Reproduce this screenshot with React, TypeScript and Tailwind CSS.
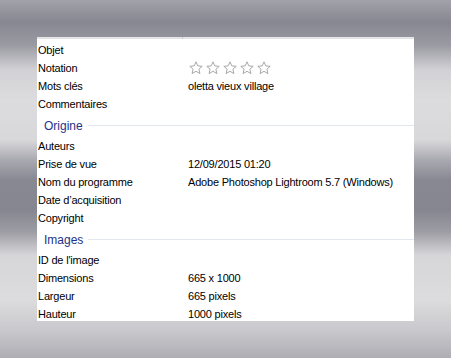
import React from 'react';

type Row = { label: string; value?: string; stars?: boolean };

const general: Row[] = [
  { label: 'Objet' },
  { label: 'Notation', stars: true },
  { label: 'Mots clés', value: 'oletta vieux village' },
  { label: 'Commentaires' },
];

const origine: Row[] = [
  { label: 'Auteurs' },
  { label: 'Prise de vue', value: '12/09/2015 01:20' },
  { label: 'Nom du programme', value: 'Adobe Photoshop Lightroom 5.7 (Windows)' },
  { label: 'Date d’acquisition' },
  { label: 'Copyright' },
];

const images: Row[] = [
  { label: "ID de l'image" },
  { label: 'Dimensions', value: '665 x 1000' },
  { label: 'Largeur', value: '665 pixels' },
  { label: 'Hauteur', value: '1000 pixels' },
];

const Star: React.FC = () => (
  <svg width="14" height="14" viewBox="0 0 14 14" fill="none">
    <path
      d="M7 0.8 L8.8 4.9 L13.2 5.3 L9.9 8.2 L10.9 12.6 L7 10.3 L3.1 12.6 L4.1 8.2 L0.8 5.3 L5.2 4.9 Z"
      stroke="#a8a8a8"
      strokeWidth="1"
      strokeLinejoin="round"
      fill="#ffffff"
    />
  </svg>
);

const PropRow: React.FC<{ row: Row }> = ({ row }) => (
  <div className="grid grid-cols-[150px_1fr] h-[18px] items-center pl-px tracking-[-0.2px]">
    <span>{row.label}</span>
    <span>
      {row.stars ? (
        <span className="flex gap-[3px] pl-px">
          <Star />
          <Star />
          <Star />
          <Star />
          <Star />
        </span>
      ) : (
        row.value
      )}
    </span>
  </div>
);

const Section: React.FC<{ title: string }> = ({ title }) => (
  <div className="flex items-center h-[24px] pl-[7px] gap-[5px] pt-px">
    <span className="text-[12px] text-[#1e3287]">{title}</span>
    <div className="flex-1 h-px bg-[#e2e7ee]" />
  </div>
);

export default function App() {
  return (
    <div
      className="w-[451px] h-[358px] overflow-hidden pt-[37px] pl-[37px] bg-[linear-gradient(to_bottom,#a2a2aa_0px,#868791_22px,#9a9aa2_45px,#d2d2d6_70px,#dcdcde_100px,#d8d8db_140px,#a9a9b0_160px,#878892_180px,#858690_210px,#9d9da4_232px,#d6d6d9_255px,#dcdcde_300px,#c9c9cd_330px,#adadb3_358px)]"
      style={{ fontFamily: '"Liberation Sans", Arial, sans-serif' }}
    >
      <div className="w-[377px] h-[284px] bg-white overflow-hidden text-[11px] text-black leading-none">
        <div className="flex h-[2px]">
          <div className="w-[145px] bg-[#e4e4e6]" />
          <div className="w-px bg-[#c8c8cc]" />
          <div className="flex-1 bg-[#e4e4e6]" />
        </div>
        <div className="pt-[2px]">
          {general.map((r) => (
            <PropRow key={r.label} row={r} />
          ))}
          <Section title="Origine" />
          {origine.map((r) => (
            <PropRow key={r.label} row={r} />
          ))}
          <Section title="Images" />
          {images.map((r) => (
            <PropRow key={r.label} row={r} />
          ))}
        </div>
      </div>
    </div>
  );
}
